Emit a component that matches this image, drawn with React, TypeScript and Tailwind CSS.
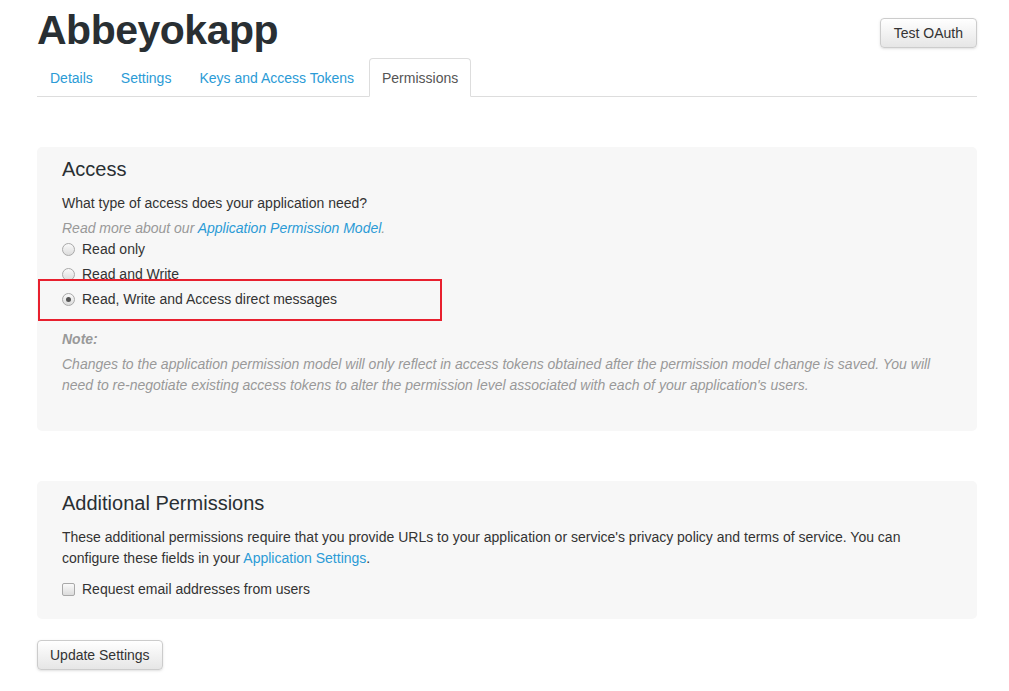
import React from 'react';

const tabs = ['Details', 'Settings', 'Keys and Access Tokens', 'Permissions'];

const Radio = ({ checked }: { checked?: boolean }) => (
  <span className="w-[13px] h-[13px] rounded-full border border-[#a9a9a9] bg-gradient-to-b from-[#fafafa] to-[#dcdcdc] flex items-center justify-center mr-[7px]">
    {checked && <span className="w-[5px] h-[5px] rounded-full bg-[#555]"></span>}
  </span>
);

const App = () => {
  return (
    <div className="min-h-[691px] bg-white text-[#333] text-[14px] leading-[20px]" style={{ fontFamily: '"Liberation Sans", Arial, sans-serif' }}>
      <div className="w-[940px] ml-[37px] relative">
        {/* header */}
        <div className="flex justify-between items-start pt-[8px]">
          <h1 className="text-[41px] leading-[44px] font-bold text-[#292f33] tracking-[-0.5px]">Abbeyokapp</h1>
          <button className="mt-[10px] h-[30px] px-[13px] rounded-[4px] border border-[#ccc] bg-gradient-to-b from-white to-[#e6e6e6] text-[#333] shadow-sm">
            Test OAuth
          </button>
        </div>

        {/* tabs */}
        <div className="flex border-b border-[#ddd] mt-[6px]">
          {tabs.map((t) => {
            const active = t === 'Permissions';
            return (
              <div
                key={t}
                className={
                  active
                    ? 'px-[12px] pt-[9px] pb-[7px] mr-[2px] mb-[-1px] border border-[#ddd] border-b-white rounded-t-[4px] bg-white text-[#555]'
                    : 'px-[12px] pt-[9px] pb-[7px] mr-[2px] border border-transparent text-[#2b9bd6]'
                }
              >
                {t}
              </div>
            );
          })}
        </div>

        {/* Access panel */}
        <div className="mt-[50px] bg-[#f7f7f7] rounded-[5px] px-[25px] pt-[9px] pb-[35px]">
          <h3 className="text-[20px] leading-[26px] text-[#292f33]">Access</h3>
          <p className="mt-[11px]">What type of access does your application need?</p>
          <p className="mt-[5px] italic text-[#999]">
            Read more about our <span className="text-[#2b9bd6]">Application Permission Model</span>.
          </p>
          <div className="flex items-center -mt-[1px] h-[24px]"><Radio />Read only</div>
          <div className="flex items-center mt-[1px] h-[24px]"><Radio />Read and Write</div>
          <div className="flex items-center mt-[1px] h-[24px]"><Radio checked />Read, Write and Access direct messages</div>
          <p className="mt-[18px] italic font-bold text-[#999]">Note:</p>
          <p className="mt-[5px] italic text-[#999] leading-[21px]">
            Changes to the application permission model will only reflect in access tokens obtained after the permission model change is saved. You will need to re-negotiate existing access tokens to alter the permission level associated with each of your application's users.
          </p>
        </div>

        {/* red annotation */}
        <div className="absolute left-[1px] top-[279px] w-[404px] h-[42px] border-2 border-[#e8202e]"></div>

        {/* Additional permissions */}
        <div className="mt-[50px] bg-[#f7f7f7] rounded-[5px] px-[25px] pt-[9px] pb-[20px]">
          <h3 className="text-[20px] leading-[26px] text-[#292f33]">Additional Permissions</h3>
          <p className="mt-[11px] leading-[21px]">
            These additional permissions require that you provide URLs to your application or service's privacy policy and terms of service. You can configure these fields in your <span className="text-[#2b9bd6]">Application Settings</span>.
          </p>
          <div className="flex items-center mt-[10px] h-[20px]">
            <span className="w-[13px] h-[13px] rounded-[2px] border border-[#a9a9a9] bg-gradient-to-b from-[#fafafa] to-[#dcdcdc] mr-[7px]"></span>
            Request email addresses from users
          </div>
        </div>

        <button className="mt-[21px] h-[30px] px-[12px] rounded-[4px] border border-[#ccc] bg-gradient-to-b from-white to-[#e6e6e6] text-[#333] shadow-sm">
          Update Settings
        </button>
      </div>
    </div>
  );
};

export default App;
